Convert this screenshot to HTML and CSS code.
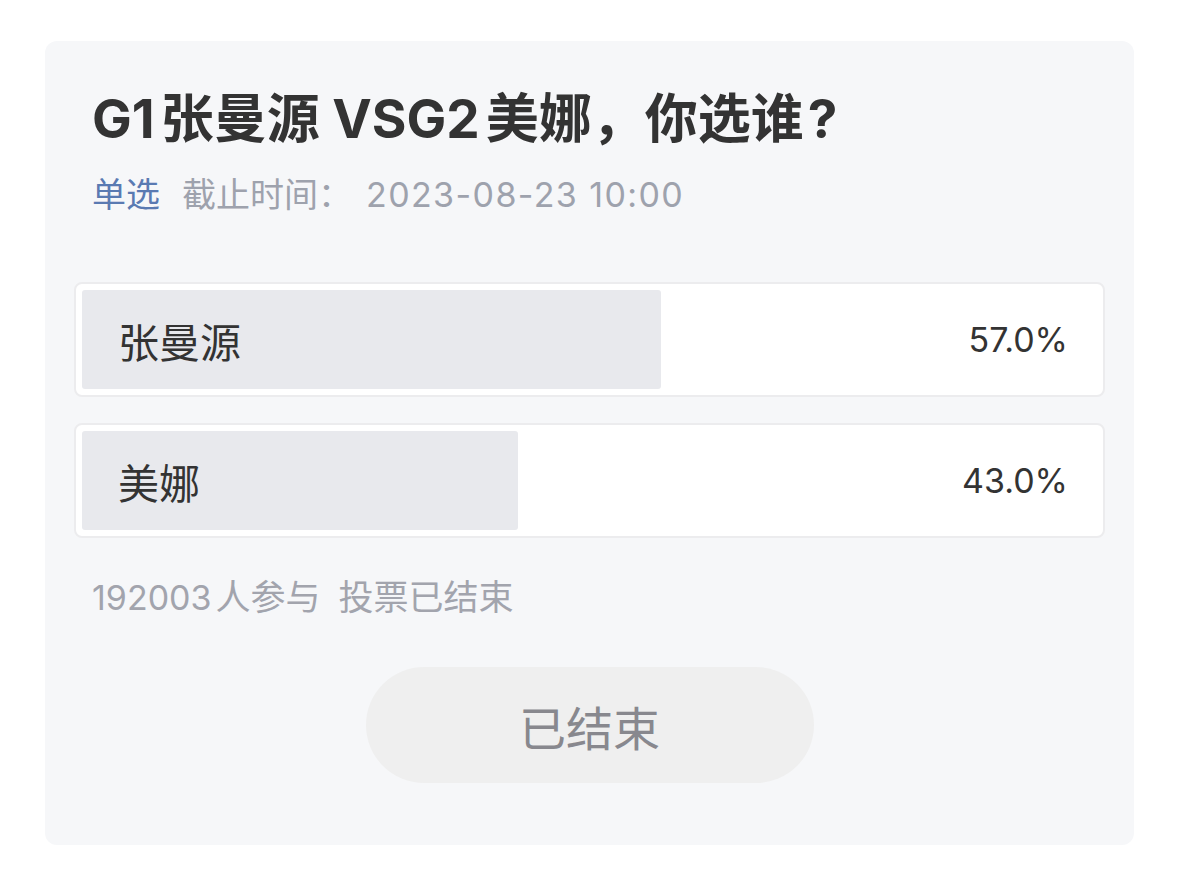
FILE: index.html
```html
<!DOCTYPE html>
<html lang="zh-CN">
<head>
<meta charset="utf-8">
<title>投票</title>
<link rel="stylesheet" href="styles.css">
</head>
<body>
<div class="vote-card">
	<div class="vote-head">
		<h2 class="vote-title"><span class="en">G1</span>张曼源 <span class="en">VSG2</span>美娜，你选谁<span class="en-q">?</span></h2>
		<p class="vote-meta"><span class="type">单选</span><span class="deadline">截止时间：<span class="num">2023-08-23 10:00</span></span></p>
	</div>
	<ul class="vote-list">
		<li class="vote-item">
			<div class="bar" style="width: 57%"></div>
			<span class="name">张曼源</span>
			<span class="rate">57.0%</span>
		</li>
		<li class="vote-item">
			<div class="bar" style="width: 43%"></div>
			<span class="name">美娜</span>
			<span class="rate">43.0%</span>
		</li>
	</ul>
	<p class="vote-foot"><span class="num">192003</span>人参与 投票已结束</p>
	<div class="vote-btn-wrap">
		<button class="vote-btn" type="button" disabled>已结束</button>
	</div>
</div>
</body>
</html>
```

FILE: styles.css
```css
* {
	margin: 0;
	padding: 0;
	box-sizing: border-box;
}
body {
	background: #fff;
	font-family: "Inter", "Noto Sans CJK SC", sans-serif;
	color: #333;
}
ul, li {
	list-style: none;
}
.vote-card {
	width: 1089px;
	margin: 41px 0 0 45px;
	padding: 42px 29px 62px;
	background: #f6f7f9;
	border-radius: 12px;
}
/* head */
.vote-head {
	padding-left: 18px;
}
.vote-title {
	font-size: 53px;
	line-height: 72px;
	font-weight: bold;
	color: #333;
}
.vote-title .en {
	margin-right: 6px;
}
.vote-title .en-q {
	margin-left: 4px;
}
.vote-meta {
	margin-top: 16px;
	font-size: 34px;
	line-height: 48px;
	color: #9ea2ad;
}
.vote-meta .type {
	color: #5a7ab2;
	margin-right: 22px;
}
.vote-meta .num {
	margin-left: 14px;
	letter-spacing: 1.4px;
}
/* list */
.vote-list {
	margin-top: 63px;
}
.vote-item {
	position: relative;
	display: flex;
	align-items: center;
	justify-content: space-between;
	height: 115px;
	padding: 0 35px 0 42px;
	background: #fff;
	border: 2px solid #ececee;
	border-radius: 8px;
}
.vote-item + .vote-item {
	margin-top: 26px;
}
.vote-item .bar {
	position: absolute;
	top: 6px;
	bottom: 6px;
	left: 6px;
	max-width: calc(100% - 12px);
	background: #e8e9ed;
	border-radius: 3px;
}
.vote-item .bar[style*="57%"] {
	width: calc((100% - 12px) * 0.57) !important;
}
.vote-item .bar[style*="43%"] {
	width: calc((100% - 12px) * 0.43) !important;
}
.vote-item .name,
.vote-item .rate {
	position: relative;
}
.vote-item .name {
	font-size: 41px;
	color: #333;
}
.vote-item .rate {
	font-size: 34px;
	color: #333;
}
/* foot */
.vote-foot {
	margin-top: 35px;
	padding-left: 18px;
	font-size: 35px;
	line-height: 48px;
	color: #a2a4ad;
	word-spacing: 8px;
}
.vote-foot .num {
	margin-right: 4px;
	font-size: 34px;
}
.vote-btn-wrap {
	display: flex;
	justify-content: center;
	margin-top: 45px;
}
.vote-btn {
	width: 448px;
	height: 116px;
	border: 0;
	border-radius: 58px;
	background: #efefef;
	font-family: inherit;
	font-size: 47px;
	color: #88888e;
}
```
